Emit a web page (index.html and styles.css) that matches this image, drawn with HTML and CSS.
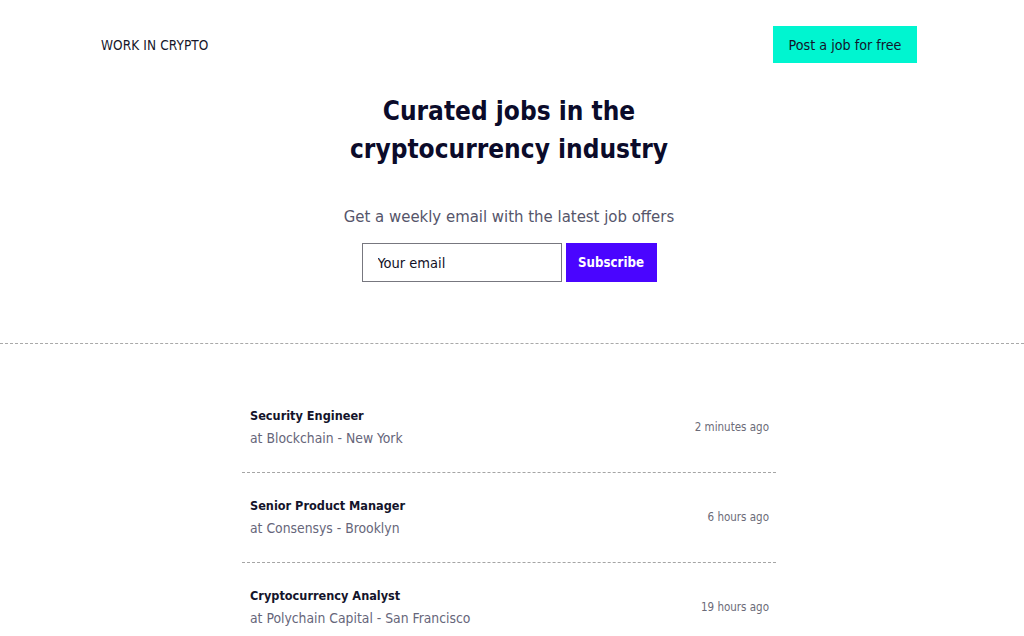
FILE: index.html
```html
<!DOCTYPE html>
<html>
<head>
<meta charset="utf-8">
<link rel="stylesheet" href="styles.css">
</head>
<body>
<header class="topbar">
  <div class="brand">WORK IN CRYPTO</div>
  <a class="post-btn" href="#">Post a job for free</a>
</header>
<section class="hero">
  <h1 class="title">Curated jobs in the<br>cryptocurrency industry</h1>
  <p class="lead">Get a weekly email with the latest job offers</p>
  <form class="subscribe">
    <input class="email" type="text" placeholder="Your email">
    <button class="sub-btn" type="button">Subscribe</button>
  </form>
</section>
<hr class="divider">
<main class="jobs">
  <div class="job">
    <div class="job-info">
      <div class="job-title">Security Engineer</div>
      <div class="job-meta">at Blockchain - New York</div>
    </div>
    <div class="job-time">2 minutes ago</div>
  </div>
  <div class="job">
    <div class="job-info">
      <div class="job-title">Senior Product Manager</div>
      <div class="job-meta">at Consensys - Brooklyn</div>
    </div>
    <div class="job-time">6 hours ago</div>
  </div>
  <div class="job">
    <div class="job-info">
      <div class="job-title">Cryptocurrency Analyst</div>
      <div class="job-meta">at Polychain Capital - San Francisco</div>
    </div>
    <div class="job-time">19 hours ago</div>
  </div>
</main>
</body>
</html>
```
FILE: styles.css
```css
* { box-sizing: border-box; }
html, body { margin: 0; padding: 0; background: #fff; }
body {
  font-family: "DejaVu Sans Condensed", "Liberation Sans", sans-serif;
  color: #0e0e2c;
  overflow: hidden;
}
.topbar {
  display: flex;
  justify-content: space-between;
  align-items: center;
  padding: 26px 107px 0 101px;
}
.brand {
  font-size: 13.5px;
  font-weight: 400;
  letter-spacing: 0.1px;
  color: #16162a;
}
.post-btn {
  display: flex;
  align-items: center;
  justify-content: center;
  width: 144px;
  height: 37px;
  background: #00f5d0;
  color: #14142b;
  text-decoration: none;
  font-size: 14.2px;
}
.hero {
  display: flex;
  flex-direction: column;
  align-items: center;
  padding-right: 6px;
}
.title {
  margin: 29px 0 0;
  font-size: 26px;
  line-height: 38px;
  font-weight: 700;
  text-align: center;
  color: #0b0b2a;
}
.lead {
  margin: 37px 0 0;
  font-size: 16.6px;
  line-height: 24px;
  color: #55556a;
  font-weight: 400;
}
.subscribe {
  display: flex;
  gap: 4px;
  margin-top: 14px;
}
.email {
  width: 200px;
  height: 39px;
  border: 1px solid #77777f;
  padding: 0 15px;
  font-family: inherit;
  font-size: 14.5px;
  color: #111;
  outline: none;
}
.email::placeholder { color: #111126; }
.sub-btn {
  width: 91px;
  height: 39px;
  border: 0;
  background: #4a05ff;
  color: #fff;
  font-family: inherit;
  font-size: 13.2px;
  font-weight: 700;
}
.divider {
  margin: 61px 0 0;
  border: 0;
  border-top: 1px dashed #a9a9a9;
}
.jobs {
  width: 534px;
  margin: 39px 0 0 242px;
}
.job {
  display: flex;
  justify-content: space-between;
  align-items: center;
  height: 90px;
  padding: 0 7px 2px 8px;
  border-bottom: 1px dashed #a5a5a5;
}
.job-title {
  font-size: 12.6px;
  line-height: 22px;
  font-weight: 700;
  color: #14142b;
}
.job-meta {
  font-size: 13.8px;
  line-height: 22px;
  color: #66667a;
}
.job-time {
  font-size: 11.5px;
  color: #6b6b78;
}
```
